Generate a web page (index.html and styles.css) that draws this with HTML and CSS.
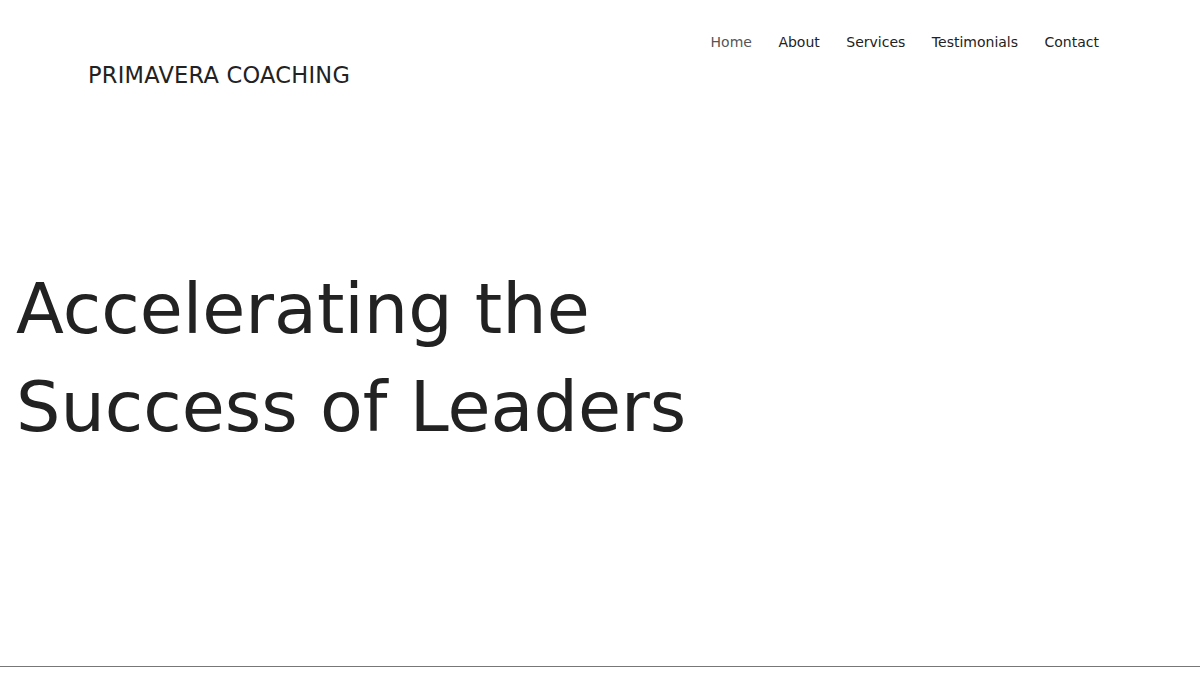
FILE: index.html
```html
<!DOCTYPE html>
<html lang="en">
<head>
    <meta charset="UTF-8">
    <meta name="viewport" content="width=device-width, initial-scale=1.0">
    <title>Primavera Coaching</title>
    <link rel="stylesheet" href="styles.css">
</head>
<body>
    <div class="page">
        <header class="site-header">
            <a href="/" class="brand">PRIMAVERA COACHING</a>
            <nav class="main-nav">
                <a href="/" class="nav-link active">Home</a>
                <a href="/about" class="nav-link">About</a>
                <a href="/services" class="nav-link">Services</a>
                <a href="/testimonials" class="nav-link">Testimonials</a>
                <a href="/contact" class="nav-link">Contact</a>
            </nav>
        </header>

        <section class="hero">
            <h1>Accelerating the<br>Success of Leaders</h1>
        </section>
    </div>
</body>
</html>
```

FILE: styles.css
```css
* {
    margin: 0;
    padding: 0;
    box-sizing: border-box;
}

body {
    font-family: 'DejaVu Sans', Verdana, sans-serif;
    background: #fff;
    color: #222;
}

.page {
    height: 667px;
    border-bottom: 1px solid #777;
    display: flex;
    flex-direction: column;
}

.site-header {
    display: flex;
    justify-content: space-between;
    align-items: flex-start;
    padding: 32px 101px 0 88px;
}

.brand {
    margin-top: 30px;
    font-size: 22.5px;
    line-height: 26px;
    letter-spacing: 0.25px;
    color: #222;
    text-decoration: none;
}

.main-nav {
    display: flex;
    gap: 26.5px;
    margin-top: 2px;
}

.nav-link {
    font-size: 14px;
    color: #222;
    text-decoration: none;
}

.nav-link.active {
    color: #555;
}

.hero {
    padding: 172px 16px 0;
}

.hero h1 {
    font-size: 70px;
    font-weight: 400;
    line-height: 98px;
    color: #222;
}
```
